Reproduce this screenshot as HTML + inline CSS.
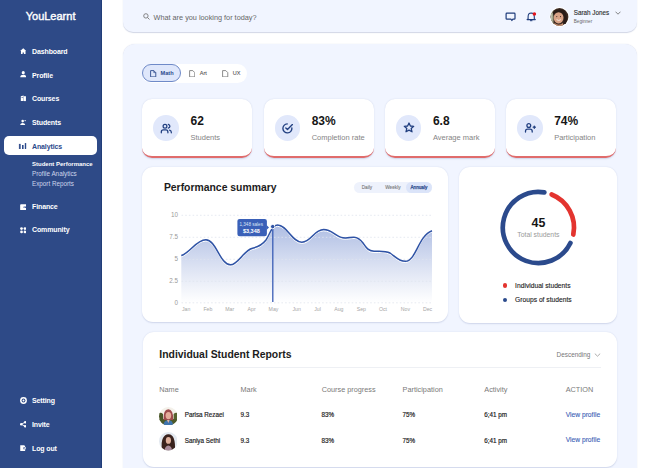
<!DOCTYPE html>
<html><head><meta charset="utf-8">
<style>
*{margin:0;padding:0;box-sizing:border-box}
html,body{width:655px;height:468px;overflow:hidden;background:#fff;font-family:"Liberation Sans",sans-serif}
.t{position:absolute;line-height:1;white-space:nowrap}
#side{position:absolute;left:0;top:0;width:102px;height:468px;background:#2e4a87;border-right:0.8px solid #213d78}
.nav{position:absolute;left:32px;color:#fff;font-size:7px;font-weight:bold;line-height:1;white-space:nowrap;letter-spacing:-0.12px}
.ni{position:absolute;left:19.5px;width:6.5px;height:6.5px}
#act{position:absolute;left:4px;top:136.4px;width:93px;height:18.6px;background:#fff;border-radius:5px}
#hdr{position:absolute;left:122.5px;top:-20px;width:514px;height:52.3px;background:#f1f5ff;border-radius:10px;box-shadow:0 0.3px 1px rgba(70,90,150,.25)}
#main{position:absolute;left:122.5px;top:44.2px;width:514px;height:440px;background:#f1f5ff;border-radius:12px;box-shadow:0 0 1px rgba(70,90,150,.25)}
.card{position:absolute;background:#fff;border-radius:9px;box-shadow:0 0.5px 1.5px rgba(70,90,150,.2)}
.stat{top:98.9px;height:58.8px;width:110.2px;border-bottom:2px solid #e06c6c;border-radius:10px}
.ic{position:absolute;top:115.3px;width:25.6px;height:25.6px;border-radius:50%;background:#e1e8fb}
.num{font-size:12px;font-weight:bold;color:#161616;top:115.1px}
.lbl{font-size:7.5px;color:#858585;top:134.4px}
.th{font-size:7.3px;color:#7a7a7a;top:385.6px}
.td{font-size:6.3px;color:#1e1e1e;-webkit-text-stroke:0.18px #1e1e1e}
.vp{font-size:6.7px;color:#3b5db5;-webkit-text-stroke:0.1px #3b5db5}
.yl{font-size:6.3px;color:#9a9a9a;text-align:right;width:20px;left:158px}
.xl{font-size:5.2px;color:#a6a6a6;text-align:center;width:20px;top:307.1px}
</style></head><body>
<div id="side">
  <div class="t" style="left:25.7px;top:10.5px;font-size:11px;color:#fff;-webkit-text-stroke:0.4px #fff">YouLearnt</div>
  <svg class="ni" style="top:47.6px" viewBox="0 0 8 8"><path d="M4 0.3L0.2 3.6H1.2V7.8H3.2V5.4H4.8V7.8H6.8V3.6H7.8Z" fill="#fff"/></svg>
  <div class="nav" style="top:47.77px">Dashboard</div>
  <svg class="ni" style="top:71.4px" viewBox="0 0 8 8"><circle cx="4" cy="2" r="1.9" fill="#fff"/><path d="M0.3 7.8C0.3 5.4 2 4.6 4 4.6S7.7 5.4 7.7 7.8Z" fill="#fff"/></svg>
  <div class="nav" style="top:71.57px">Profile</div>
  <svg class="ni" style="top:95.4px" viewBox="0 0 8 8"><path d="M1 1.5L4.5 0.5V7.5L1 7.5Z" fill="#fff"/><rect x="4.8" y="1.5" width="2.5" height="6" fill="#fff"/><rect x="1.8" y="3" width="2" height="0.7" fill="#2e4a87"/></svg>
  <div class="nav" style="top:95.37px">Courses</div>
  <svg class="ni" style="top:118.8px" viewBox="0 0 8 8"><circle cx="3.3" cy="2.6" r="1.6" fill="#fff"/><path d="M0.2 7.8C0.2 5.8 1.6 4.8 3.3 4.8S6.4 5.8 6.4 7.8Z" fill="#fff"/><path d="M5 2.8L6.2 1.5L7.8 3" stroke="#fff" stroke-width="0.9" fill="none"/></svg>
  <div class="nav" style="top:119.17px">Students</div>
  <div id="act"></div>
  <svg class="t" style="left:18px;top:142px;width:9px;height:8px" viewBox="0 0 9 8"><rect x="0.9" y="1.9" width="1.8" height="5.1" fill="#3a5590"/><rect x="4" y="3" width="1.6" height="4" fill="#2b4a8c"/><rect x="6.8" y="0.9" width="1.4" height="6.1" rx="0.5" fill="#2b4a8c"/></svg>
  <div class="nav" style="top:142.97px;color:#2b4a8c">Analytics</div>
  <div class="t" style="left:32px;top:160.7px;font-size:6.0px;font-weight:bold;color:#fff">Student Performance</div>
  <div class="t" style="left:32px;top:171px;font-size:6.35px;color:#cdd5ec">Profile Analytics</div>
  <div class="t" style="left:32px;top:181.4px;font-size:6.3px;color:#cdd5ec">Export Reports</div>
  <svg class="ni" style="top:203.5px" viewBox="0 0 8 8"><rect x="0.2" y="0.2" width="7.6" height="7.6" rx="1" fill="#fff"/><rect x="4.3" y="3" width="3.5" height="2" rx="0.4" fill="#4a62a0"/><circle cx="5.3" cy="4" r="0.5" fill="#fff"/></svg>
  <div class="nav" style="top:203.47px">Finance</div>
  <svg class="ni" style="top:227.2px" viewBox="0 0 8 8"><circle cx="1.9" cy="1.9" r="1.7" fill="#fff"/><circle cx="6.1" cy="1.9" r="1.7" fill="#fff"/><circle cx="1.9" cy="6.1" r="1.7" fill="#fff"/><circle cx="6.1" cy="6.1" r="1.7" fill="#fff"/></svg>
  <div class="nav" style="top:226.37px">Community</div>
  <svg class="ni" style="top:396.8px;width:7px;height:7px" viewBox="0 0 8 8"><circle cx="4" cy="4" r="3.9" fill="#fff"/><circle cx="4" cy="4" r="2.2" fill="#2e4a87"/><circle cx="4" cy="4" r="1.1" fill="#fff"/></svg>
  <div class="nav" style="top:397.27px">Setting</div>
  <svg class="ni" style="top:421.1px" viewBox="0 0 8 8"><circle cx="6.4" cy="1.5" r="1.5" fill="#fff"/><circle cx="1.5" cy="4" r="1.5" fill="#fff"/><circle cx="6.4" cy="6.5" r="1.5" fill="#fff"/><path d="M6.4 1.5L1.5 4L6.4 6.5" stroke="#fff" stroke-width="1.1" fill="none"/></svg>
  <div class="nav" style="top:420.87px">Invite</div>
  <svg class="ni" style="top:444.9px" viewBox="0 0 8 8"><path d="M0.3 0.3H5.2L6.3 1.4V2.8H4.2V5.2H6.3V7.7H0.3Z" fill="#fff"/><path d="M4.8 4H7.9M6.5 2.6L7.9 4L6.5 5.4" stroke="#fff" stroke-width="1" fill="none"/></svg>
  <div class="nav" style="top:444.87px">Log out</div>
</div>

<div id="hdr"></div>
<div id="main"></div>

<!-- header contents -->
<svg class="t" style="left:142.5px;top:13px;width:7px;height:7px" viewBox="0 0 7 7"><circle cx="2.9" cy="2.9" r="2.2" stroke="#777" stroke-width="0.9" fill="none"/><path d="M4.5 4.5L6.5 6.5" stroke="#777" stroke-width="0.9"/></svg>
<div class="t" style="left:153.5px;top:14.3px;font-size:7.3px;color:#666">What are you looking for today?</div>
<svg class="t" style="left:504.5px;top:11.5px;width:11px;height:10px" viewBox="0 0 11 10"><path d="M1.9 1.1H9.2Q10 1.1 10 1.9V6.4Q10 7.2 9.2 7.2H7.9L6.9 8.5L5.9 7.2H1.9Q1.1 7.2 1.1 6.4V1.9Q1.1 1.1 1.9 1.1Z" stroke="#1f3c7c" stroke-width="1.2" fill="none" stroke-linejoin="round"/></svg>
<svg class="t" style="left:526.3px;top:12px;width:11px;height:10px" viewBox="0 0 11 10"><path d="M2.1 7.1V4.7Q2.1 1.1 5.2 1Q8.3 1.1 8.3 4.7V7.1L9.3 7.6H1.1Z" stroke="#1f3c7c" stroke-width="1.1" fill="none" stroke-linejoin="round"/><path d="M4.4 8.7H6" stroke="#1f3c7c" stroke-width="1" stroke-linecap="round"/><circle cx="8.4" cy="2.1" r="1.75" fill="#e3141b"/></svg>
<svg class="t" style="left:548.5px;top:6.5px;width:21px;height:21px" viewBox="0 0 21 21">
  <circle cx="10.5" cy="10" r="10" fill="#fff"/>
  <clipPath id="av0"><circle cx="10.5" cy="10" r="8.9"/></clipPath>
  <g clip-path="url(#av0)">
    <rect x="0" y="0" width="21" height="21" fill="#3d2b23"/>
    <rect x="0" y="0" width="4.6" height="21" fill="#8a8a70"/>
    <rect x="2.2" y="3" width="1.2" height="12" fill="#c8ccb8"/>
    <path d="M3.5 5Q9 0.5 15.5 3.5Q19 8 17.5 17L14.5 17Q15 9 12.5 6Q8 5 4.8 9Z" fill="#2a1d18"/>
    <ellipse cx="9.6" cy="10.8" rx="4.9" ry="5.6" fill="#d9a387"/>
    <path d="M5.5 16Q10 19.5 14 16L14.5 21H5Z" fill="#c99272"/>
    <circle cx="7.8" cy="9.6" r="0.55" fill="#3a2520"/>
    <circle cx="11.5" cy="9.6" r="0.55" fill="#3a2520"/>
    <path d="M7.6 12.6Q9.7 14.4 11.8 12.6" stroke="#f4e6dc" stroke-width="1" fill="none"/>
  </g>
</svg>
<div class="t" style="left:573.8px;top:9.6px;font-size:6.3px;color:#2e2e2e;-webkit-text-stroke:0.12px #2e2e2e">Sarah Jones</div>
<div class="t" style="left:573.8px;top:19.6px;font-size:4.6px;color:#666">Beginner</div>
<svg class="t" style="left:615px;top:10.5px;width:6px;height:4px" viewBox="0 0 6 4"><path d="M0.5 0.7L3 3.2L5.5 0.7" stroke="#666" stroke-width="0.8" fill="none"/></svg>

<!-- tabs -->
<div class="t" style="left:141.8px;top:63.8px;width:105.5px;height:18.8px;background:#fff;border-radius:9.4px"></div>
<div class="t" style="left:142.4px;top:64.4px;width:38.8px;height:17.9px;background:#dfe7fb;border:0.8px solid #6f8ac8;border-radius:9px"></div>
<svg class="t" style="left:150.3px;top:69.9px;width:6.4px;height:7.5px" viewBox="0 0 6.4 7.5"><path d="M0.6 0.6H3.8L5.8 2.6V6.9H0.6Z" stroke="#2b4a8c" stroke-width="0.9" fill="none" stroke-linejoin="round"/><path d="M3.8 0.6V2.6H5.8" stroke="#2b4a8c" stroke-width="0.7" fill="none"/></svg>
<div class="t" style="left:160.6px;top:70.6px;font-size:5.6px;font-weight:bold;color:#2b4a8c">Math</div>
<svg class="t" style="left:188.6px;top:69.9px;width:6.4px;height:7.5px" viewBox="0 0 6.4 7.5"><path d="M0.6 0.6H3.8L5.8 2.6V6.9H0.6Z" stroke="#6f6f6f" stroke-width="0.8" fill="none" stroke-linejoin="round"/></svg>
<div class="t" style="left:199.8px;top:70.6px;font-size:5.5px;color:#555;-webkit-text-stroke:0.1px #555">Art</div>
<svg class="t" style="left:222.2px;top:69.9px;width:6.4px;height:7.5px" viewBox="0 0 6.4 7.5"><path d="M0.6 0.6H3.8L5.8 2.6V6.9H0.6Z" stroke="#6f6f6f" stroke-width="0.8" fill="none" stroke-linejoin="round"/></svg>
<div class="t" style="left:232.8px;top:70.6px;font-size:5.5px;color:#555;-webkit-text-stroke:0.1px #555">UX</div>

<!-- stat cards -->
<div class="card stat" style="left:142.2px"></div>
<div class="card stat" style="left:263.7px"></div>
<div class="card stat" style="left:384.6px"></div>
<div class="card stat" style="left:506.3px"></div>
<div class="ic" style="left:153.4px"></div>
<div class="ic" style="left:274.8px"></div>
<div class="ic" style="left:395.9px"></div>
<div class="ic" style="left:517.3px"></div>
<svg class="t" style="left:160px;top:122.5px;width:12.5px;height:11.5px" viewBox="0 0 12.5 11.5"><g stroke="#213f80" stroke-width="1.25" fill="none" stroke-linecap="round"><circle cx="5" cy="3.2" r="1.9"/><path d="M1.3 9.8V8.9Q1.3 6.9 3.3 6.9H5.9Q7.9 6.9 7.9 8.9V9.8"/><path d="M8.3 1.3Q9.9 1.8 9.9 3.2Q9.9 4.6 8.3 5.1"/><path d="M9.6 7.1Q11.3 7.6 11.3 9.2V9.8"/></g></svg>
<svg class="t" style="left:281.3px;top:122.6px;width:13px;height:11px" viewBox="0 0 13 11"><g stroke="#213f80" stroke-width="1.35" fill="none" stroke-linecap="round" stroke-linejoin="round"><path d="M10.88 5.01A4.5 4.5 0 1 1 6.24 0.90"/><path d="M4.8 4.9L6.5 6.5L11.4 1.6"/></g></svg>
<svg class="t" style="left:403px;top:122.2px;width:12px;height:11px" viewBox="0 0 12 11"><path d="M6 1L7.4 4L10.7 4.3L8.2 6.5L9 9.8L6 8.1L3 9.8L3.8 6.5L1.3 4.3L4.6 4Z" stroke="#213f80" stroke-width="1.3" fill="none" stroke-linejoin="round"/></svg>
<svg class="t" style="left:524px;top:122.2px;width:13px;height:11px" viewBox="0 0 13 11"><g stroke="#213f80" stroke-width="1.3" fill="none" stroke-linecap="round"><circle cx="4.8" cy="3.5" r="1.9"/><path d="M1.5 10.1V9.2Q1.5 7.1 3.6 7.1H6.1Q8.2 7.1 8.2 9.2V10.1"/><path d="M9.2 5.2H11.4M10.3 4.1V6.3"/></g></svg>
<div class="t num" style="left:190.5px">62</div>
<div class="t lbl" style="left:190.5px">Students</div>
<div class="t num" style="left:311.7px">83%</div>
<div class="t lbl" style="left:311.7px">Completion rate</div>
<div class="t num" style="left:432.9px">6.8</div>
<div class="t lbl" style="left:432.9px">Average mark</div>
<div class="t num" style="left:554.2px">74%</div>
<div class="t lbl" style="left:554.2px">Participation</div>

<!-- chart card -->
<div class="card" style="left:142.3px;top:167.3px;width:306.1px;height:155.1px;border-radius:11px"></div>
<div class="t" style="left:163.9px;top:183.1px;font-size:10.4px;font-weight:bold;color:#1c1c1c">Performance summary</div>
<div class="t" style="left:354.3px;top:181.8px;width:78.1px;height:11.2px;background:#eef2fc;border-radius:6px"></div>
<div class="t" style="left:406.3px;top:181.8px;width:26.1px;height:11.2px;background:#dbe4f9;border-radius:6px"></div>
<div class="t" style="left:356.9px;width:20px;text-align:center;top:186.1px;font-size:4.7px;color:#7a7a7a;-webkit-text-stroke:0.1px #7a7a7a">Daily</div>
<div class="t" style="left:382.9px;width:20px;text-align:center;top:186.1px;font-size:4.7px;color:#7a7a7a;-webkit-text-stroke:0.1px #7a7a7a">Weekly</div>
<div class="t" style="left:408.9px;width:20px;text-align:center;top:186.1px;font-size:4.7px;color:#2b4a8c;-webkit-text-stroke:0.25px #2b4a8c">Annualy</div>
<div class="t yl" style="top:212.2px">10</div>
<div class="t yl" style="top:234.2px">7.5</div>
<div class="t yl" style="top:256.2px">5</div>
<div class="t yl" style="top:278.2px">2.5</div>
<div class="t yl" style="top:300.2px">0</div>
<div class="t xl" style="left:176.2px">Jan</div>
<div class="t xl" style="left:197.9px">Feb</div>
<div class="t xl" style="left:219.7px">Mar</div>
<div class="t xl" style="left:241.6px">Apr</div>
<div class="t xl" style="left:263.5px">May</div>
<div class="t xl" style="left:286.7px">Jun</div>
<div class="t xl" style="left:307.5px">Jul</div>
<div class="t xl" style="left:328.9px">Aug</div>
<div class="t xl" style="left:351.3px">Sep</div>
<div class="t xl" style="left:373px">Oct</div>
<div class="t xl" style="left:395.4px">Nov</div>
<div class="t xl" style="left:417.6px">Dec</div>

<div class="card" style="left:459.4px;top:167.3px;width:157.6px;height:155.3px;border-radius:11px"></div>
<svg class="t" style="left:0;top:0;width:655px;height:468px" viewBox="0 0 655 468">
  <defs>
    <linearGradient id="fg" x1="0" y1="0" x2="0" y2="1" gradientUnits="objectBoundingBox">
      <stop offset="0" stop-color="#aebde3"/>
      <stop offset="1" stop-color="#ffffff" stop-opacity="0.9"/>
    </linearGradient>
  </defs>

  <path d="M181.3,255.50 C190,253.00 196,240.00 205.8,239.80 C216,239.60 220,264.80 230.4,264.80 C238,264.80 244,250.00 252.5,248.20 C258,247.00 262,245.00 266,240.00 C270,234.00 272,225.00 277.5,225.00 C287,225.00 292,242.20 301.8,242.20 C311,242.20 314,229.60 323.6,229.60 C332,229.60 336,237.00 343,237.80 C348,238.40 350,237.20 354,237.20 C358,237.20 360,239.00 363,243.00 C366,247.50 368,251.00 374,251.20 C380,251.40 385,250.50 390,253.00 C396,257.00 399,261.30 405.4,261.30 C416,261.30 418,236.00 432,230.70 L432,303 L181.3,303 Z" fill="url(#fg)"/>
  <g stroke="#e0e4ee" stroke-width="0.8" stroke-dasharray="1.6 2.1">
    <line x1="181.5" y1="215.3" x2="432" y2="215.3"/>
    <line x1="181.5" y1="237.3" x2="432" y2="237.3"/>
    <line x1="181.5" y1="259.3" x2="432" y2="259.3"/>
    <line x1="181.5" y1="281.3" x2="432" y2="281.3"/>
    <line x1="181.5" y1="302.8" x2="432" y2="302.8"/>
  </g>
  <path d="M181.3,256.80 C190,254.30 196,241.30 205.8,241.10 C216,240.90 220,266.10 230.4,266.10 C238,266.10 244,251.30 252.5,249.50 C258,248.30 262,246.30 266,241.30 C270,235.30 272,226.30 277.5,226.30 C287,226.30 292,243.50 301.8,243.50 C311,243.50 314,230.90 323.6,230.90 C332,230.90 336,238.30 343,239.10 C348,239.70 350,238.50 354,238.50 C358,238.50 360,240.30 363,244.30 C366,248.80 368,252.30 374,252.50 C380,252.70 385,251.80 390,254.30 C396,258.30 399,262.60 405.4,262.60 C416,262.60 418,237.30 432,232.00" stroke="#ffffff" stroke-width="1" fill="none"/>
  <path d="M181.3,255.50 C190,253.00 196,240.00 205.8,239.80 C216,239.60 220,264.80 230.4,264.80 C238,264.80 244,250.00 252.5,248.20 C258,247.00 262,245.00 266,240.00 C270,234.00 272,225.00 277.5,225.00 C287,225.00 292,242.20 301.8,242.20 C311,242.20 314,229.60 323.6,229.60 C332,229.60 336,237.00 343,237.80 C348,238.40 350,237.20 354,237.20 C358,237.20 360,239.00 363,243.00 C366,247.50 368,251.00 374,251.20 C380,251.40 385,250.50 390,253.00 C396,257.00 399,261.30 405.4,261.30 C416,261.30 418,236.00 432,230.70" stroke="#2f53a5" stroke-width="1.5" fill="none"/>
  <line x1="272.8" y1="227" x2="272.8" y2="302" stroke="#3a5db5" stroke-width="1.3"/>
  <circle cx="272.7" cy="226.6" r="2.2" fill="#2f53a5" stroke="#fff" stroke-width="0.9"/>
  <rect x="237.4" y="218.9" width="29.5" height="17.3" rx="2.2" fill="#3a60b8"/>
  <path d="M266.5 225L269 227.5L266.5 230Z" fill="#3a60b8"/>


  <!-- donut -->
  <g fill="none" stroke-width="4.7" stroke-linecap="round">
    <path stroke="#e3342f" d="M551.62 194.45A35.6 35.6 0 0 1 573.30 234.54"/>
    <path stroke="#2b4a8c" d="M570.42 243.05A35.6 35.6 0 1 1 544.34 192.40"/>
  </g>
</svg>


<div class="t" style="left:231.2px;width:40px;text-align:center;top:223.4px;font-size:4.6px;color:#dbe3f5">1,348 sales</div>
<div class="t" style="left:231.4px;width:40px;text-align:center;top:229.3px;font-size:5.5px;font-weight:bold;color:#fff">$3,348</div>
<div class="t" style="left:518.4px;width:40px;text-align:center;top:217.1px;font-size:12.4px;font-weight:bold;color:#161616">45</div>
<div class="t" style="left:498.4px;width:80px;text-align:center;top:231.6px;font-size:6.85px;color:#9a9a9a">Total students</div>
<div class="t" style="left:502.6px;top:283.1px;width:4.8px;height:4.8px;border-radius:50%;background:#e3342f"></div>
<div class="t" style="left:502.6px;top:297.7px;width:4.8px;height:4.8px;border-radius:50%;background:#2b4a8c"></div>
<div class="t" style="left:515.1px;top:282.6px;font-size:6.7px;color:#222;-webkit-text-stroke:0.12px #222">Individual students</div>
<div class="t" style="left:515.1px;top:297.2px;font-size:6.7px;color:#222;-webkit-text-stroke:0.12px #222">Groups of students</div>
<!-- reports card -->
<div class="card" style="left:142.6px;top:332.4px;width:474.5px;height:134.2px;border-radius:11px"></div>
<div class="t" style="left:159.3px;top:349.5px;font-size:10.4px;font-weight:bold;color:#1c1c1c">Individual Student Reports</div>
<div class="t" style="left:556.6px;top:352px;font-size:6.4px;color:#777">Descending</div>
<svg class="t" style="left:593.5px;top:353.3px;width:7px;height:4px" viewBox="0 0 7 4"><path d="M0.8 0.6L3.5 3.2L6.2 0.6" stroke="#888" stroke-width="0.7" fill="none"/></svg>
<div class="t" style="left:159.3px;top:367.3px;width:441.4px;height:0.7px;background:#eef0f4"></div>
<div class="t th" style="left:159.3px">Name</div>
<div class="t th" style="left:240.5px">Mark</div>
<div class="t th" style="left:321.7px">Course progress</div>
<div class="t th" style="left:402.6px">Participation</div>
<div class="t th" style="left:484.3px">Activity</div>
<div class="t th" style="left:565.7px">ACTION</div>

<svg class="t" style="left:158.7px;top:406.9px;width:18.6px;height:18.6px" viewBox="0 0 18.6 18.6">
  <clipPath id="av1"><circle cx="9.3" cy="9.3" r="9.3"/></clipPath>
  <g clip-path="url(#av1)">
    <rect width="18.6" height="18.6" fill="#f4f1ea"/>
    <path d="M0 6Q2 5 4 7L4 18.6H0Z" fill="#4a5628"/>
    <path d="M18.6 6Q16.6 5 14.6 7L14.6 18.6H18.6Z" fill="#56622e"/>
    <path d="M0 12H18.6V18.6H0Z" fill="#4d5a2a"/>
    <path d="M4.5 13Q4 2.5 9.3 2.2Q14.6 2.5 14.2 13Z" fill="#9e4b4c"/>
    <ellipse cx="9.4" cy="8.6" rx="2.8" ry="3.7" fill="#e5ac9a"/>
    <path d="M4.2 18.6Q4.8 13.2 9.3 13Q13.8 13.2 14.4 18.6Z" fill="#3f74ad"/>
    <path d="M8 13L9.3 16L10.6 13Z" fill="#e2b5a0"/>
  </g>
</svg>
<svg class="t" style="left:158.7px;top:432.2px;width:18.6px;height:18.6px" viewBox="0 0 18.6 18.6">
  <clipPath id="av2"><circle cx="9.3" cy="9.3" r="9.3"/></clipPath>
  <g clip-path="url(#av2)">
    <rect width="18.6" height="18.6" fill="#e3e9f0"/>
    <path d="M3 18.6Q1.8 10 4 6Q6 2 9.5 2.2Q13.5 2.4 14.8 6.5Q16.5 11 15.8 18.6Z" fill="#3a231e"/>
    <ellipse cx="9.4" cy="8.4" rx="2.6" ry="3.4" fill="#dfb19d"/>
    <path d="M5.5 18.6Q6 14 9.3 13.6Q12.6 14 13.2 18.6Z" fill="#a98c9c"/>
  </g>
</svg>
<div class="t td" style="left:184.7px;top:412px">Parisa Rezaei</div>
<div class="t td" style="left:184.7px;top:437.6px">Saniya Sethi</div>
<div class="t td" style="left:240.5px;top:412px">9.3</div>
<div class="t td" style="left:240.5px;top:437.6px">9.3</div>
<div class="t td" style="left:321.5px;top:412px">83%</div>
<div class="t td" style="left:321.5px;top:437.6px">83%</div>
<div class="t td" style="left:402.4px;top:412px">75%</div>
<div class="t td" style="left:402.4px;top:437.6px">75%</div>
<div class="t td" style="left:484.3px;top:412px">6;41 pm</div>
<div class="t td" style="left:484.3px;top:437.6px">6;41 pm</div>
<div class="t vp" style="left:565.7px;top:411.5px">View profile</div>
<div class="t vp" style="left:565.7px;top:437.1px">View profile</div>
</body></html>
